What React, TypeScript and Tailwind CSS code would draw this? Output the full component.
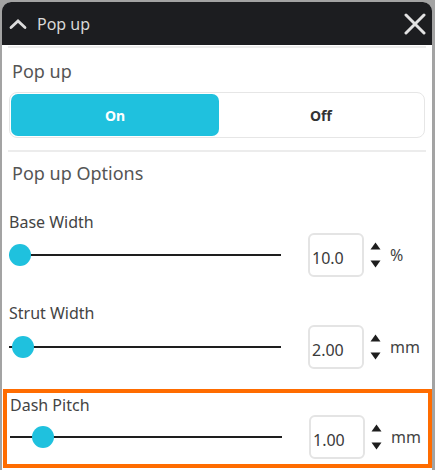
import React from "react";

const font = { fontFamily: '"Noto Sans", "Open Sans", sans-serif' };

function Spinner() {
  return (
    <svg width="11" height="26" viewBox="0 0 11 26" className="ml-[6px] shrink-0">
      <path d="M5.5 0.5 L10.5 7.5 L0.5 7.5 Z" fill="#1e1e1e" />
      <path d="M5.5 25.5 L10.5 18.5 L0.5 18.5 Z" fill="#1e1e1e" />
    </svg>
  );
}

function SliderRow({
  thumbX,
  value,
  unit,
  h,
}: {
  thumbX: number;
  value: string;
  unit: string;
  h: string;
}) {
  return (
    <div className={`flex items-center ${h}`}>
      <div className="relative w-[272px] h-[22px] shrink-0">
        <div className="absolute left-0 right-0 top-[10px] h-[2px] bg-[#1e1e1e]" />
        <div
          className="absolute top-0 w-[22px] h-[22px] rounded-full bg-[#1fc1de]"
          style={{ left: thumbX - 11 - 9 }}
        />
      </div>
      <div className="ml-[27px] w-[56px] h-[44px] rounded-[6px] border-2 border-[#e4e4e4] flex items-center pl-[2px] pt-[6px] text-[16px] text-[#3a3a3a] shrink-0">
        {value}
      </div>
      <Spinner />
      <div className="ml-[9px] text-[16px] text-[#444]">{unit}</div>
    </div>
  );
}

export default function App() {
  return (
    <div className="w-[435px] h-[470px] bg-[#a3a3a3] pt-[2px] pl-[2px] pr-[3px] overflow-hidden" style={font}>
      <div className="w-full h-[468px] bg-white rounded-t-[9px] overflow-hidden flex flex-col">
        <div className="h-[43px] bg-[#1c1d20] flex items-center shrink-0">
          <svg width="18" height="12" viewBox="0 0 18 12" className="ml-[7px]">
            <path d="M2 9.5 L9 3 L16 9.5" stroke="#dcdcdc" strokeWidth="2.8" fill="none" strokeLinecap="round" />
          </svg>
          <span className="ml-[10px] text-[16px] text-[#d9d9d9] leading-none">Pop up</span>
          <div className="flex-1" />
          <svg width="22" height="22" viewBox="0 0 22 22" className="mr-[6px]">
            <path d="M2 2 L20 20 M20 2 L2 20" stroke="#e2e2e2" strokeWidth="3" strokeLinecap="round" />
          </svg>
        </div>
        <div className="mx-[6px] mt-[1px] h-[2px] bg-[#ececec]" />
        <div className="px-[10px] mt-[11px] text-[18px] leading-[24px] text-[#555]">Pop up</div>
        <div className="mx-[7px] mt-[9px] h-[46px] rounded-[8px] border border-[#e6e6e6] flex p-px">
          <div className="w-[208px] rounded-[7px] bg-[#1fc1de] flex items-center justify-center text-white font-bold text-[14px]">
            On
          </div>
          <div className="flex-1 flex items-center justify-center text-[#333] font-bold text-[14px]">Off</div>
        </div>
        <div className="mx-[6px] mt-[12px] h-[2px] bg-[#ececec]" />
        <div className="px-[10px] mt-[9px] text-[18px] leading-[24px] text-[#555]">Pop up Options</div>

        <div className="pl-[7px] mt-[27px] text-[16px] leading-[20px] text-[#444]">Base Width</div>
        <div className="pl-[7px]">
          <SliderRow thumbX={19.5} value="10.0" unit="%" h="h-[45px]" />
        </div>

        <div className="pl-[7px] mt-[26px] text-[16px] leading-[20px] text-[#444]">Strut Width</div>
        <div className="pl-[7px] mt-[2px]">
          <SliderRow thumbX={23} value="2.00" unit="mm" h="h-[44px]" />
        </div>

        <div className="mt-[20px] ml-[1px] mr-0 h-[79px] border-4 border-[#ff6c00] pl-[3px]">
          <div className="pt-[2px] text-[16px] leading-[20px] text-[#444]">Dash Pitch</div>
          <SliderRow thumbX={42} value="1.00" unit="mm" h="h-[44px]" />
        </div>
      </div>
    </div>
  );
}
